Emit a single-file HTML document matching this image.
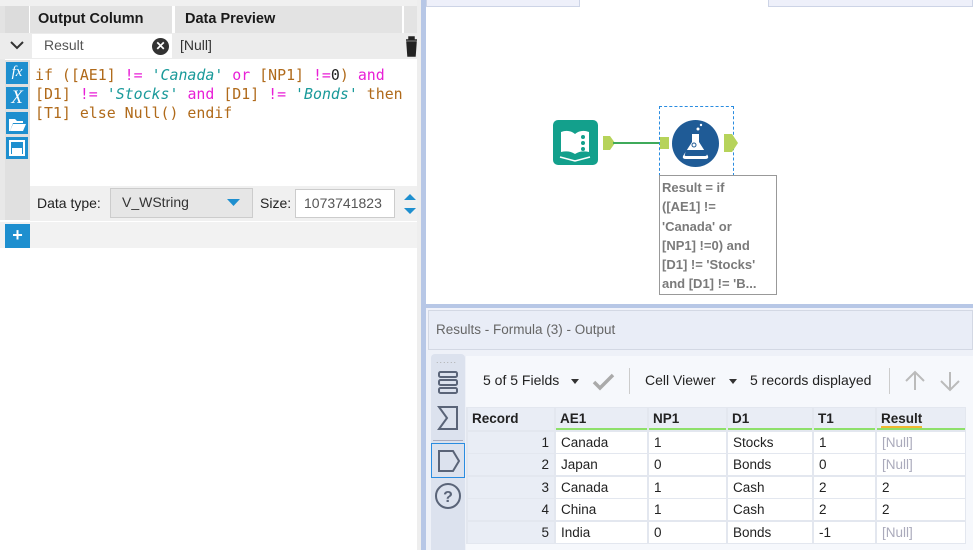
<!DOCTYPE html>
<html><head><meta charset="utf-8"><style>
*{margin:0;padding:0;box-sizing:border-box}
body{width:973px;height:550px;position:relative;overflow:hidden;background:#fff;font-family:"Segoe UI","Liberation Sans",sans-serif;font-size:14px;color:#222}
.a{position:absolute}
.mono{font-family:"DejaVu Sans Mono","Liberation Mono",monospace;font-size:14.9px;line-height:19px;white-space:pre}
.pk{color:#e81fd6}.br{color:#b06a1a}.tl{color:#1a9a9a;font-style:italic}.bk{color:#222}
.cell{position:absolute;height:21px;line-height:21px;font-size:13.5px;padding-left:5px;background:#fff}
.hd{position:absolute;height:22px;line-height:21px;font-size:13.5px;font-weight:bold;padding-left:4px;background:#e9edf5}
</style></head><body>
<div class="a" style="left:0;top:0;width:417px;height:6px;background:#f0f0f0"></div>
<div class="a" style="left:0;top:6px;width:417px;height:27px;background:#e3e3e3"></div>
<div class="a" style="left:5px;top:6px;width:25px;height:27px;background:#dcdcdc;border-right:1px solid #fff"></div>
<div class="a" style="left:38px;top:11px;font-weight:bold;font-size:14.5px;color:#1a1a1a">Output Column</div>
<div class="a" style="left:172px;top:6px;width:3px;height:27px;background:#fff"></div>
<div class="a" style="left:185px;top:11px;font-weight:bold;font-size:14.5px;color:#1a1a1a">Data Preview</div>
<div class="a" style="left:402px;top:6px;width:2px;height:27px;background:#fff"></div>
<div class="a" style="left:0;top:33px;width:417px;height:26px;background:#ececec"></div>
<svg class="a" style="left:9px;top:40px" width="16" height="10"><path d="M2 2l6 6 6-6" stroke="#333" stroke-width="2" fill="none"/></svg>
<div class="a" style="left:32px;top:34px;width:140px;height:24px;background:#fff"></div>
<div class="a" style="left:44px;top:37px;font-size:14px;color:#555">Result</div>
<div class="a" style="left:152px;top:38px;width:17px;height:17px;border-radius:50%;background:#333;color:#fff;font-size:12px;line-height:17px;text-align:center;font-weight:bold">✕</div>
<div class="a" style="left:180px;top:37px;font-size:14px;color:#333">[Null]</div>
<svg class="a" style="left:405px;top:35px" width="13" height="22"><path d="M1 5h11M4 5V2h5v3M2 7h9l-1 14H3z" stroke="#222" stroke-width="1.5" fill="#222"/></svg>
<div class="a" style="left:5px;top:60px;width:25px;height:160px;background:#e0e0e0"></div>
<div class="a" style="left:6px;top:62px;width:22px;height:22px;background:#1e8fcf;color:#fff;font-style:italic;font-family:'Liberation Serif',serif;font-size:15px;text-align:center;line-height:20px">fx</div>
<div class="a" style="left:6px;top:87px;width:22px;height:22px;background:#1e8fcf;color:#fff;font-style:italic;font-family:'Liberation Serif',serif;font-size:19px;text-align:center;line-height:22px">X</div>
<div class="a" style="left:6px;top:112px;width:22px;height:22px;background:#1e8fcf"><svg width="22" height="22"><path d="M3 7h6l2 2h6v2H7l-3 8H3z" fill="#fff"/><path d="M7 12h13l-3 7H4z" fill="#fff"/></svg></div>
<div class="a" style="left:6px;top:137px;width:22px;height:22px;background:#1e8fcf"><div class="a" style="left:3px;top:3px;width:16px;height:16px;border:2px solid #fff"></div><div class="a" style="left:6px;top:11px;width:10px;height:6px;background:#fff"></div></div>
<div class="a mono" style="left:35px;top:66px"><span class="br">if ([AE1] </span><span class="pk">!=</span> <span class="tl">'Canada'</span> <span class="pk">or</span> <span class="br">[NP1] </span><span class="pk">!=</span><span class="bk">0</span><span class="br">)</span> <span class="pk">and</span>
<span class="br">[D1] </span><span class="pk">!=</span> <span class="tl">'Stocks'</span> <span class="pk">and</span> <span class="br">[D1] </span><span class="pk">!=</span> <span class="tl">'Bonds'</span> <span class="br">then</span>
<span class="br">[T1] else Null() endif</span></div>
<div class="a" style="left:30px;top:186px;width:387px;height:35px;background:#f0f0f0"></div>
<div class="a" style="left:37px;top:195px;font-size:14px">Data type:</div>
<div class="a" style="left:110px;top:188px;width:143px;height:30px;background:#e6e6e6;border:1px solid #ccc"></div>
<div class="a" style="left:122px;top:194px;font-size:14px;color:#333">V_WString</div>
<svg class="a" style="left:227px;top:199px" width="13" height="8"><path d="M0 0h13L6.5 7z" fill="#1e8fcf"/></svg>
<div class="a" style="left:260px;top:195px;font-size:14px">Size:</div>
<div class="a" style="left:295px;top:189px;width:100px;height:29px;background:#fff;border:1px solid #ccc"></div>
<div class="a" style="left:304px;top:195px;font-size:14px;color:#555">1073741823</div>
<svg class="a" style="left:403px;top:192px" width="14" height="24"><path d="M1 8L7 2l6 6z M1 16l6 6 6-6z" fill="#1e8fcf"/></svg>
<div class="a" style="left:0;top:222px;width:417px;height:26px;background:#f2f2f2"></div>
<div class="a" style="left:5px;top:224px;width:25px;height:24px;background:#1e8fcf;color:#fff;font-weight:bold;font-size:18px;text-align:center;line-height:23px">+</div>
<div class="a" style="left:0;top:59px;width:5px;height:161px;background:#e8e8e8"></div>
<div class="a" style="left:417px;top:0;width:5px;height:550px;background:#eeeeee"></div>
<div class="a" style="left:421px;top:0;width:5px;height:550px;background:#b7c7e6"></div>
<div class="a" style="left:426px;top:0;width:154px;height:7px;background:#eef0fa;border:1px solid #cdd4e6;border-top:none"></div>
<div class="a" style="left:768px;top:0;width:205px;height:7px;background:#eef0fa;border:1px solid #cdd4e6;border-top:none"></div>
<div class="a" style="left:553px;top:120px;width:45px;height:45px;border-radius:5px;background:#13a08c"></div>
<svg class="a" style="left:553px;top:120px" width="45" height="45"><path d="M8 12q8-3 14 2v20q-6-4-14-2z M36 12q-8-3-14 2v20q6-4 14-2z" fill="#fff"/><circle cx="30" cy="17" r="2" fill="#13a08c"/><circle cx="30" cy="23" r="2" fill="#13a08c"/><circle cx="30" cy="29" r="2" fill="#13a08c"/><path d="M7 37l15 4 15-4" stroke="#fff" stroke-width="1.5" fill="none"/></svg>
<svg class="a" style="left:602px;top:135px" width="14" height="16"><path d="M1 1h7l5 7-5 7H1z" fill="#b6d35a"/></svg>
<div class="a" style="left:613px;top:142px;width:47px;height:2px;background:#3faa5a"></div>
<div class="a" style="left:659px;top:106px;width:75px;height:70px;border:1px dashed #2a8ce0"></div>
<div class="a" style="left:660px;top:137px;width:9px;height:12px;background:#b6d35a"></div>
<div class="a" style="left:672px;top:120px;width:47px;height:47px;border-radius:50%;background:#1f5b96"></div>
<svg class="a" style="left:672px;top:120px" width="47" height="47"><path d="M20 14h7v8l9 14q1 3-3 3H14q-4 0-3-3l9-14z" fill="#fff"/><path d="M14 30h19l2 4q0 2-2 2H14q-2 0-1-2z" fill="#1f5b96"/><circle cx="22" cy="25" r="2" fill="none" stroke="#1f5b96"/><circle cx="26" cy="9" r="1.5" fill="#fff"/><circle cx="29" cy="5" r="1.2" fill="#fff"/></svg>
<svg class="a" style="left:723px;top:133px" width="16" height="20"><path d="M1 1h8l6 9-6 9H1z" fill="#b6d35a"/></svg>
<div class="a" style="left:659px;top:175px;width:118px;height:120px;background:#fff;border:1px solid #999;padding:2px 2px;font-size:13px;line-height:19.3px;color:#7a7a7a;font-weight:bold">Result = if<br>([AE1] !=<br>'Canada' or<br>[NP1] !=0) and<br>[D1] != 'Stocks'<br>and [D1] != 'B...</div>
<div class="a" style="left:426px;top:304px;width:547px;height:4px;background:#b7c7e6"></div>
<div class="a" style="left:426px;top:308px;width:547px;height:42px;background:#f0f2fa"></div>
<div class="a" style="left:428px;top:310px;width:545px;height:40px;background:#e9edf7;border:1px solid #d3d8e4"></div>
<div class="a" style="left:436px;top:322px;font-size:13.5px;color:#666">Results - Formula (3) - Output</div>
<div class="a" style="left:426px;top:350px;width:547px;height:200px;background:#eef1f8"></div>
<div class="a" style="left:431px;top:354px;width:34px;height:196px;background:#dce2ee;border-radius:4px 4px 0 0"></div>
<div class="a" style="left:436px;top:355px;font-size:9px;color:#aaa;letter-spacing:1px">......</div>
<svg class="a" style="left:436px;top:370px" width="24" height="26"><g fill="none" stroke="#5a6478" stroke-width="2"><rect x="3" y="2" width="18" height="5" rx="1.5"/><rect x="3" y="10" width="18" height="5" rx="1.5"/><rect x="3" y="18" width="18" height="5" rx="1.5"/></g></svg>
<svg class="a" style="left:436px;top:405px" width="24" height="26"><path d="M3 2h18v22H3l8-11z" fill="none" stroke="#5a6478" stroke-width="2"/></svg>
<div class="a" style="left:433px;top:440px;width:30px;height:1px;background:#aab"></div>
<div class="a" style="left:431px;top:443px;width:34px;height:35px;border:1.5px solid #2a8ce0"></div>
<svg class="a" style="left:436px;top:448px" width="26" height="26"><path d="M3 3h14l6 10-6 10H3z" fill="none" stroke="#5a6478" stroke-width="2"/></svg>
<svg class="a" style="left:433px;top:481px" width="30" height="30"><circle cx="15" cy="15" r="12" fill="none" stroke="#5a6478" stroke-width="2"/><text x="15" y="21" font-size="16" font-weight="bold" fill="#5a6478" text-anchor="middle" font-family="Liberation Sans">?</text></svg>
<div class="a" style="left:466px;top:356px;width:507px;height:194px;background:#f6f8fc"></div>
<div class="a" style="left:483px;top:372px;font-size:14px">5 of 5 Fields</div>
<svg class="a" style="left:571px;top:379px" width="8" height="5"><path d="M0 0h8L4 5z" fill="#333"/></svg>
<svg class="a" style="left:592px;top:373px" width="24" height="18"><path d="M2 9l6 6L21 2" stroke="#aaa" stroke-width="3.5" fill="none"/></svg>
<div class="a" style="left:629px;top:368px;width:1px;height:26px;background:#ccc"></div>
<div class="a" style="left:645px;top:372px;font-size:14px">Cell Viewer</div>
<svg class="a" style="left:729px;top:379px" width="8" height="5"><path d="M0 0h8L4 5z" fill="#333"/></svg>
<div class="a" style="left:750px;top:372px;font-size:14px">5 records displayed</div>
<div class="a" style="left:889px;top:368px;width:1px;height:26px;background:#ccc"></div>
<svg class="a" style="left:903px;top:369px" width="24" height="24"><path d="M12 21V3M3 12l9-9 9 9" stroke="#bbb" stroke-width="2" fill="none"/></svg>
<svg class="a" style="left:938px;top:369px" width="24" height="24"><path d="M12 3v18M3 12l9 9 9-9" stroke="#bbb" stroke-width="2" fill="none"/></svg>
<div class="a" style="left:466px;top:407px;width:500px;height:137px;background:#e3e7ef"></div>
<div class="hd" style="left:468px;top:408px;width:86px">Record</div>
<div class="hd" style="left:556px;top:408px;width:91px;border-bottom:2px solid #8ee06a">AE1</div>
<div class="hd" style="left:649px;top:408px;width:77px;border-bottom:2px solid #8ee06a">NP1</div>
<div class="hd" style="left:728px;top:408px;width:84px;border-bottom:2px solid #8ee06a">D1</div>
<div class="hd" style="left:814px;top:408px;width:61px;border-bottom:2px solid #8ee06a">T1</div>
<div class="hd" style="left:877px;top:408px;width:88px;border-bottom:2px solid #8ee06a"><span style="border-bottom:2px solid #f2b630">Result</span></div>
<div class="cell" style="left:468px;top:432px;width:86px;background:#e9edf5;text-align:right;padding-right:5px">1</div>
<div class="cell" style="left:556px;top:432px;width:91px">Canada</div><div class="cell" style="left:649px;top:432px;width:77px">1</div><div class="cell" style="left:728px;top:432px;width:84px">Stocks</div><div class="cell" style="left:814px;top:432px;width:61px">1</div><div class="cell" style="left:877px;top:432px;width:88px;color:#aab">[Null]</div>
<div class="cell" style="left:468px;top:454px;width:86px;background:#e9edf5;text-align:right;padding-right:5px">2</div>
<div class="cell" style="left:556px;top:454px;width:91px">Japan</div><div class="cell" style="left:649px;top:454px;width:77px">0</div><div class="cell" style="left:728px;top:454px;width:84px">Bonds</div><div class="cell" style="left:814px;top:454px;width:61px">0</div><div class="cell" style="left:877px;top:454px;width:88px;color:#aab">[Null]</div>
<div class="cell" style="left:468px;top:477px;width:86px;background:#e9edf5;text-align:right;padding-right:5px">3</div>
<div class="cell" style="left:556px;top:477px;width:91px">Canada</div><div class="cell" style="left:649px;top:477px;width:77px">1</div><div class="cell" style="left:728px;top:477px;width:84px">Cash</div><div class="cell" style="left:814px;top:477px;width:61px">2</div><div class="cell" style="left:877px;top:477px;width:88px">2</div>
<div class="cell" style="left:468px;top:499px;width:86px;background:#e9edf5;text-align:right;padding-right:5px">4</div>
<div class="cell" style="left:556px;top:499px;width:91px">China</div><div class="cell" style="left:649px;top:499px;width:77px">1</div><div class="cell" style="left:728px;top:499px;width:84px">Cash</div><div class="cell" style="left:814px;top:499px;width:61px">2</div><div class="cell" style="left:877px;top:499px;width:88px">2</div>
<div class="cell" style="left:468px;top:522px;width:86px;background:#e9edf5;text-align:right;padding-right:5px">5</div>
<div class="cell" style="left:556px;top:522px;width:91px">India</div><div class="cell" style="left:649px;top:522px;width:77px">0</div><div class="cell" style="left:728px;top:522px;width:84px">Bonds</div><div class="cell" style="left:814px;top:522px;width:61px">-1</div><div class="cell" style="left:877px;top:522px;width:88px;color:#aab">[Null]</div>
</body></html>
